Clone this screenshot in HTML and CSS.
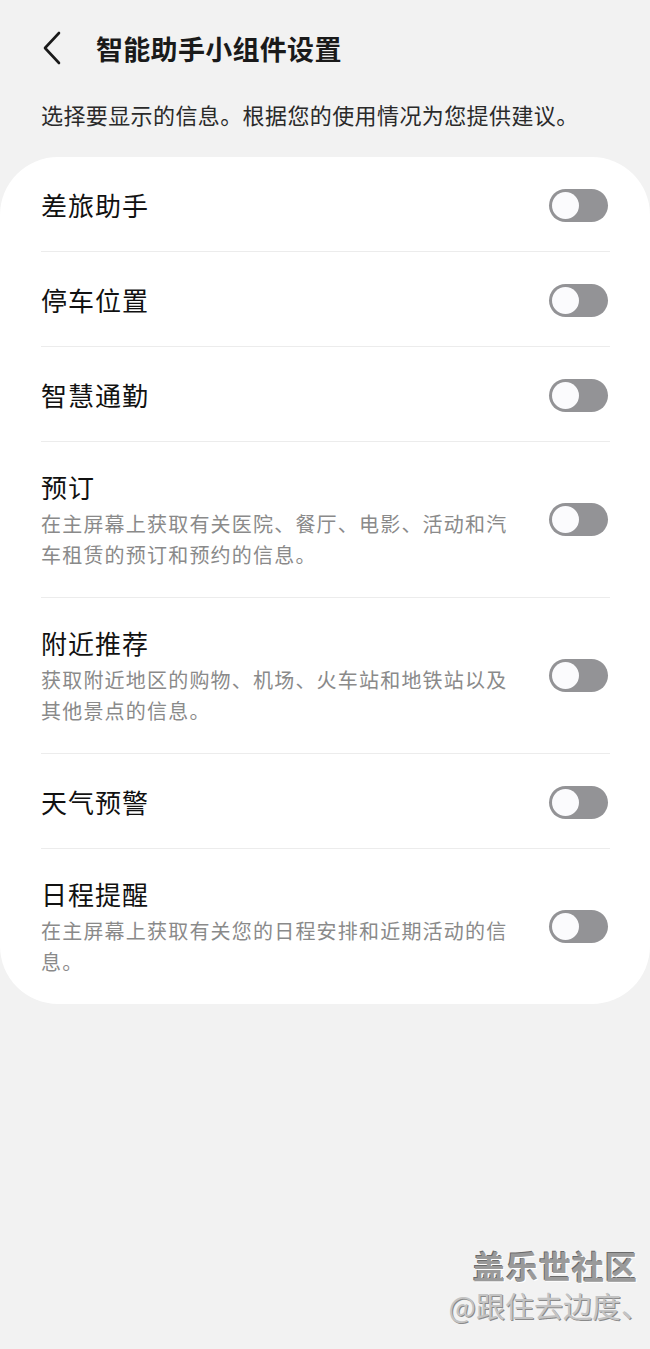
FILE: index.html
```html
<!DOCTYPE HTML>
<html>
<head>
	<meta http-equiv="Content-Type" content="text/html; charset=utf-8">
	<title>智能助手小组件设置</title>

	<link rel="stylesheet" href="styles.css">
</head>

<body>
<div class="page">
	<div class="header">
		<a class="back" href="#">
			<svg width="20" height="34" viewBox="0 0 20 34"><polyline points="17,2 3,17 17,32" fill="none" stroke="#1a1a1a" stroke-width="2.6" stroke-linecap="round" stroke-linejoin="round"/></svg>
		</a>
		<div class="title">智能助手小组件设置</div>
	</div>
	<div class="intro">选择要显示的信息。根据您的使用情况为您提供建议。</div>

	<div class="card">
		<div class="row">
			<div class="text"><div class="name">差旅助手</div></div>
			<div class="switch"></div>
		</div>
		<div class="row">
			<div class="text"><div class="name">停车位置</div></div>
			<div class="switch"></div>
		</div>
		<div class="row">
			<div class="text"><div class="name">智慧通勤</div></div>
			<div class="switch"></div>
		</div>
		<div class="row tall">
			<div class="text">
				<div class="name">预订</div>
				<div class="desc">在主屏幕上获取有关医院、餐厅、电影、活动和汽车租赁的预订和预约的信息。</div>
			</div>
			<div class="switch"></div>
		</div>
		<div class="row tall">
			<div class="text">
				<div class="name">附近推荐</div>
				<div class="desc">获取附近地区的购物、机场、火车站和地铁站以及其他景点的信息。</div>
			</div>
			<div class="switch"></div>
		</div>
		<div class="row">
			<div class="text"><div class="name">天气预警</div></div>
			<div class="switch"></div>
		</div>
		<div class="row tall">
			<div class="text">
				<div class="name">日程提醒</div>
				<div class="desc">在主屏幕上获取有关您的日程安排和近期活动的信息。</div>
			</div>
			<div class="switch"></div>
		</div>
	</div>

	<div class="mark">
		<div class="mark-big">盖乐世社区</div>
		<div class="mark-small">@跟住去边度、</div>
	</div>
</div>
</body>
</html>
```

FILE: styles.css
```css
*{
	margin: 0;
	padding: 0;
	box-sizing: border-box;
}
body{
	background: #f2f2f2;
	font-family: "Noto Sans CJK SC", "Noto Sans", sans-serif;
	color: #111;
}
.page{
	width: 650px;
	min-height: 1349px;
	position: relative;
}

.header{
	height: 96px;
	display: flex;
	align-items: center;
	padding-left: 42px;
}
.back{
	display: flex;
	width: 54px;
}
.title{
	font-size: 27px;
	font-weight: 700;
	letter-spacing: 0.3px;
	color: #1a1a1a;
}

.intro{
	margin-top: 2px;
	padding: 0 41px;
	font-size: 22px;
	line-height: 32px;
	letter-spacing: 0.4px;
	color: #2a2a2a;
	margin-bottom: 27px;
}

.card{
	background: #fff;
	border-radius: 58px;
	padding: 0 40px 0 41px;
}
.row{
	display: flex;
	align-items: center;
	justify-content: space-between;
	padding: 30px 0 28px;
	border-bottom: 1px solid #ececec;
}
.row:last-child{
	border-bottom: none;
}
.row.tall{
	padding: 27px 0 27px;
}
.text{
	max-width: 472px;
}
.name{
	font-size: 26px;
	line-height: 36px;
	letter-spacing: 1px;
	color: #111;
}
.desc{
	margin-top: 3px;
	font-size: 20px;
	line-height: 31px;
	letter-spacing: 1.2px;
	color: #8a8a8a;
}

.switch{
	width: 59px;
	height: 33px;
	border-radius: 17px;
	background: #939396;
	position: relative;
	margin-right: 2px;
	flex-shrink: 0;
}
.switch::after{
	content: "";
	position: absolute;
	left: 3px;
	top: 3px;
	width: 27px;
	height: 27px;
	border-radius: 50%;
	background: #fbfbfd;
}

.mark{
	position: absolute;
	right: 12px;
	top: 1244px;
	text-align: right;
}
.mark-big{
	font-size: 32px;
	font-weight: 700;
	line-height: 42px;
	letter-spacing: 1px;
	color: #9a9a9a;
	text-shadow: 1px 1px 0 #fff, -1px -1px 0 #6a6a6a;
}
.mark-small{
	font-size: 29px;
	line-height: 38px;
	margin-right: -12px;
	color: #c4c4c4;
	text-shadow: 1px 1px 0 #8a8a8a;
}
```
